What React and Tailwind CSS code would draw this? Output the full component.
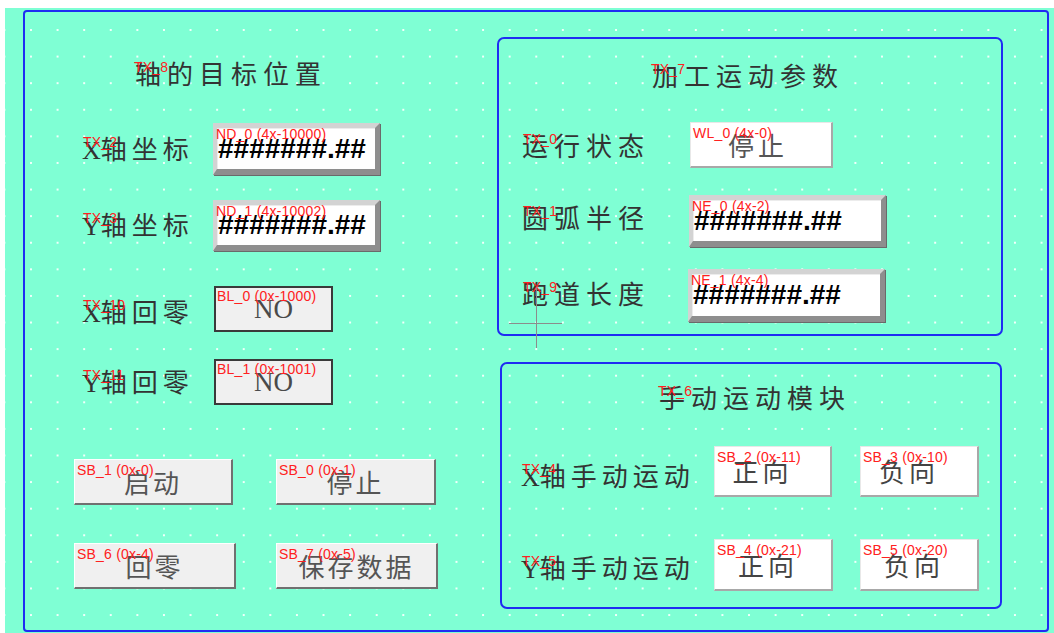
import React from 'react';

const sans = "font-['Liberation_Sans',Arial,sans-serif]";
const cjk = "font-['Noto_Sans_CJK_SC',sans-serif]";

function Tag({ children, className = '' }) {
  return (
    <span
      className={`pointer-events-none absolute whitespace-nowrap text-[14px] leading-[15px] tracking-[0.2px] text-[#ff2020] ${sans} ${className}`}
    >
      {children}
    </span>
  );
}

function Label({ axis, text, tag, className = '', wide = false }) {
  return (
    <div
      className={`relative whitespace-nowrap text-[26px] leading-[36px] text-[#333333] ${
        wide ? 'tracking-[6px]' : 'tracking-[5px]'
      } ${cjk} ${className}`}
    >
      {axis && <span className="font-['Liberation_Serif',serif] tracking-[0px]">{axis}</span>}
      {text}
      <Tag className="left-[1px] top-[5px]">{tag}</Tag>
    </div>
  );
}

function Title({ text, tag }) {
  return (
    <div className={`relative h-[36px] whitespace-nowrap text-[26px] leading-[36px] tracking-[6px] text-[#333333] ${cjk}`}>
      {text}
      <Tag className="-left-[1px] top-[5px]">{tag}</Tag>
    </div>
  );
}

// beveled numeric display
function NumBox({ tag, className = '' }) {
  return (
    <div
      className={`relative flex shrink-0 items-center border-t-[5px] border-l-[4px] border-r-[5px] border-b-[6px] border-t-[#d3d3d3] border-l-[#d3d3d3] border-r-[#8e8e8e] border-b-[#8e8e8e] bg-white shadow-[inset_1px_1px_0_#ececec,1px_1px_0_#6a6a6a] ${className}`}
    >
      <span className={`${sans} pl-[1px] text-[28px] font-bold leading-none text-black`}>#######.##</span>
      <Tag className="-left-[1px] -top-[1px]">{tag}</Tag>
    </div>
  );
}

function Lamp({ tag }) {
  return (
    <div className="relative flex h-[46px] w-[119px] shrink-0 items-center justify-center border-2 border-[#3a3a3a] bg-[#f0f0f0]">
      <span className="font-['Liberation_Serif',serif] text-[27px] leading-none text-[#4a4a4a]">NO</span>
      <Tag className="left-[1px] top-[1px]">{tag}</Tag>
    </div>
  );
}

function GrayButton({ tag, text, className = '' }) {
  return (
    <div
      className={`relative flex h-[46px] shrink-0 items-center justify-center border-t border-l border-t-white border-l-white border-r-2 border-b-2 border-r-[#707070] border-b-[#707070] bg-[#f0f0f0] ${className}`}
    >
      <span className={`${cjk} text-[26px] leading-none tracking-[3px] text-[#555555]`}>{text}</span>
      <Tag className="left-[2px] top-[3px]">{tag}</Tag>
    </div>
  );
}

function WhiteButton({ tag, text, className = '', textClass = '' }) {
  return (
    <div
      className={`relative flex shrink-0 items-center justify-center border-t border-l border-t-[#e8e8e8] border-l-[#e8e8e8] border-r-2 border-b-2 border-r-[#a8a8a8] border-b-[#a8a8a8] bg-white ${className}`}
    >
      <span className={`${cjk} text-[26px] leading-none tracking-[4px] text-[#444444] ${textClass}`}>{text}</span>
      <Tag className="left-[2px] top-[3px]">{tag}</Tag>
    </div>
  );
}

export default function App() {
  return (
    <div className="h-[633px] overflow-hidden bg-white pl-[5px] pt-[8px]">
      <div className="h-[625px] bg-[#7fffd4] bg-[radial-gradient(circle_at_1px_1px,rgba(255,255,255,0.9)_0.9px,transparent_1.5px)] bg-size-[26.6px_26.6px] bg-position-[25px_21px] pl-[18px] pt-[2px]">
        <div className="flex h-[622px] w-[1026px] rounded-[4px] border-2 border-[#1f2cf2]">
          {/* left: axis targets */}
          <div className="w-[472px] shrink-0">
            <div className="pl-[110px] pt-[43px]">
              <Title text="轴的目标位置" tag="TX_8" />
            </div>

            <div className="mt-[32px] flex h-[52px] items-center pl-[57px]">
              <Label axis="X" text="轴坐标" tag="TX_2" className="w-[131px]" />
              <NumBox tag="ND_0 (4x-10000)" className="h-[52px] w-[167px]" />
            </div>
            <div className="mt-[25px] flex h-[51px] items-center pl-[57px]">
              <Label axis="Y" text="轴坐标" tag="TX_3" className="w-[131px]" />
              <NumBox tag="ND_1 (4x-10002)" className="h-[51px] w-[167px]" />
            </div>

            <div className="mt-[35px] flex h-[46px] items-center pl-[57px]">
              <Label axis="X" text="轴回零" tag="TX_10" className="mt-[6px] w-[132px]" />
              <Lamp tag="BL_0 (0x-1000)" />
            </div>
            <div className="mt-[27px] flex h-[46px] items-center pl-[57px]">
              <Label axis="Y" text="轴回零" tag="TX_11" className="w-[132px]" />
              <Lamp tag="BL_1 (0x-1001)" />
            </div>

            <div className="mt-[54px] flex gap-[43px] pl-[49px]">
              <GrayButton tag="SB_1 (0x-0)" text="启动" className="w-[159px]" />
              <GrayButton tag="SB_0 (0x-1)" text="停止" className="w-[160px]" />
            </div>
            <div className="mt-[38px] flex gap-[40px] pl-[49px]">
              <GrayButton tag="SB_6 (0x-4)" text="回零" className="w-[162px]" />
              <GrayButton tag="SB_7 (0x-5)" text="保存数据" className="w-[162px]" />
            </div>
          </div>

          {/* right: panels */}
          <div className="flex flex-col">
            <div className="relative mt-[25px] h-[299px] w-[506px] rounded-[7px] border-2 border-[#1f2cf2]">
              <div className="pl-[153px] pt-[18px]">
                <Title text="加工运动参数" tag="TX_7" />
              </div>
              <div className="mt-[29px] flex h-[46px] items-center pl-[23px]">
                <Label text="运行状态" tag="TX_0" wide className="w-[168px]" />
                <WhiteButton tag="WL_0 (4x-0)" text="停止" className="h-[46px] w-[143px]" textClass="pr-[6px] text-[#555555]" />
              </div>
              <div className="mt-[27px] flex h-[52px] items-center pl-[23px]">
                <Label text="圆弧半径" tag="TX_1" wide className="mb-[8px] w-[167px]" />
                <NumBox tag="NE_0 (4x-2)" className="h-[52px] w-[197px]" />
              </div>
              <div className="mt-[22px] flex h-[53px] items-center pl-[23px]">
                <Label text="跑道长度" tag="TX_9" wide className="mb-[5px] w-[166px]" />
                <NumBox tag="NE_1 (4x-4)" className="h-[53px] w-[197px]" />
              </div>
              {/* editor crosshair cursor */}
              <div className="pointer-events-none absolute left-[37px] top-[248px] h-[61px] w-px bg-[#8c8c8c]" />
              <div className="pointer-events-none absolute left-[10px] top-[284px] h-px w-[53px] bg-[#8c8c8c]" />
            </div>

            <div className="ml-[3px] mt-[26px] h-[247px] w-[502px] rounded-[7px] border-2 border-[#1f2cf2]">
              <div className="pl-[157px] pt-[15px]">
                <Title text="手动运动模块" tag="TX_6" />
              </div>
              <div className="mt-[31px] flex h-[51px] items-center pl-[19px]">
                <Label axis="X" text="轴手动运动" tag="TX_4" className="mt-[9px] w-[193px]" />
                <WhiteButton tag="SB_2 (0x-11)" text="正向" className="h-[51px] w-[118px]" textClass="pr-[20px]" />
                <WhiteButton tag="SB_3 (0x-10)" text="负向" className="ml-[28px] h-[51px] w-[119px]" textClass="pr-[20px]" />
              </div>
              <div className="mt-[42px] flex h-[52px] items-center pl-[19px]">
                <Label axis="Y" text="轴手动运动" tag="TX_5" className="mt-[6px] w-[193px]" />
                <WhiteButton tag="SB_4 (0x-21)" text="正向" className="h-[52px] w-[119px]" textClass="pr-[10px]" />
                <WhiteButton tag="SB_5 (0x-20)" text="负向" className="ml-[27px] h-[52px] w-[119px]" textClass="pr-[10px]" />
              </div>
            </div>
          </div>
        </div>
      </div>
    </div>
  );
}
